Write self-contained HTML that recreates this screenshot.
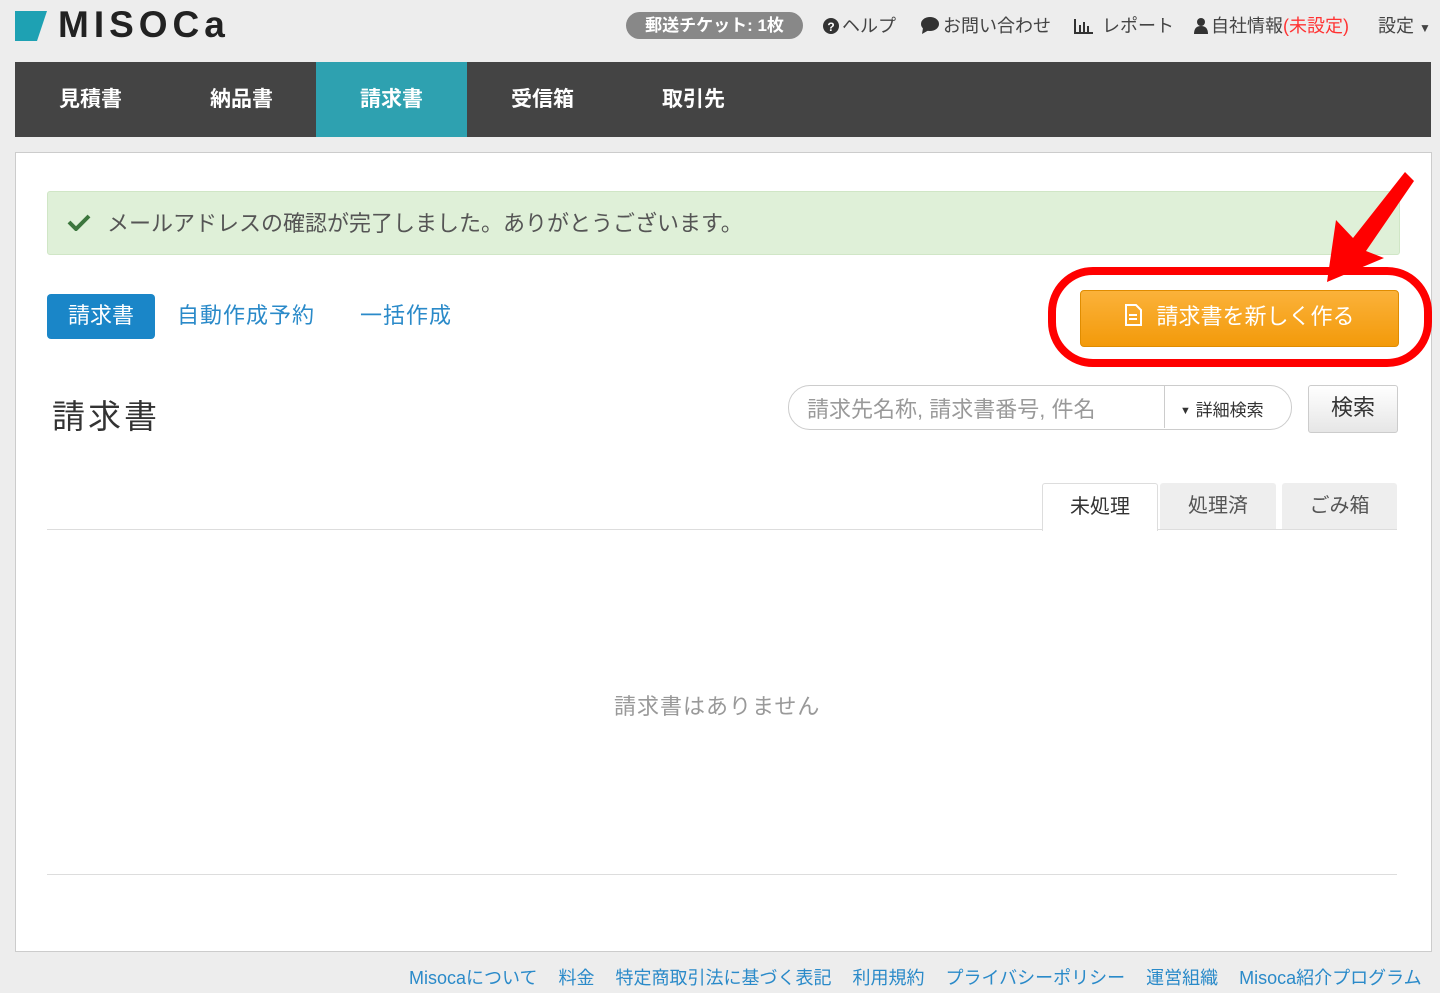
<!DOCTYPE html>
<html><head><meta charset="utf-8"><style>
body{margin:0;width:1440px;height:993px;background:#ededed;font-family:"Liberation Sans","Noto Sans CJK JP",sans-serif;position:relative;overflow:hidden;color:#333}
.a{position:absolute;white-space:nowrap}
.nav{position:absolute;left:15px;top:62px;width:1416px;height:75px;background:#444}
.nav div{position:absolute;top:0;height:75px;line-height:75px;width:151px;text-align:center;color:#fff;font-size:21px;font-weight:bold}
.top{font-size:18px;color:#444;top:12px}
.panel{position:absolute;left:15px;top:152px;width:1415px;height:798px;background:#fff;border:1px solid #ccc}
.ic{display:inline-block;vertical-align:-2px;margin-right:3px}
.ft span{margin-right:21px}
</style></head><body>
<svg class="a" style="left:15px;top:11px" width="32" height="32"><polygon points="0,0 32,0 22,30 0,30" fill="#1ea1b3"/></svg>
<div class="a" style="left:58px;top:4px;font-size:37px;font-weight:bold;color:#222;letter-spacing:5px">MISOCa</div>
<div class="a" style="left:626px;top:12px;width:177px;height:27px;border-radius:14px;background:#888;color:#fff;font-size:17px;font-weight:bold;text-align:center;line-height:27px">郵送チケット: 1枚</div>
<div class="a top" style="left:823px"><svg class="ic" width="16" height="16"><circle cx="8" cy="8" r="8" fill="#333"/><text x="8" y="13" font-size="12" font-weight="bold" fill="#fff" text-anchor="middle" font-family="Liberation Sans">?</text></svg>ヘルプ</div>
<div class="a top" style="left:920px"><svg class="ic" width="20" height="18"><ellipse cx="10" cy="8" rx="9" ry="7" fill="#333"/><polygon points="3,12 2,18 9,14" fill="#333"/></svg>お問い合わせ</div>
<div class="a top" style="left:1074px"><svg class="ic" width="20" height="16"><path d="M1 1V15H19" stroke="#333" stroke-width="2" fill="none"/><rect x="5" y="7" width="2" height="7" fill="#333"/><rect x="9" y="4" width="2" height="10" fill="#333"/><rect x="13" y="8" width="2" height="6" fill="#333"/></svg> レポート</div>
<div class="a top" style="left:1194px"><svg class="ic" width="14" height="17"><circle cx="7" cy="5" r="4" fill="#333"/><path d="M0 17Q0 9 7 9Q14 9 14 17Z" fill="#333"/></svg>自社情報<span style="color:#f33">(未設定)</span></div>
<div class="a top" style="left:1378px">設定 <span style="font-size:12px">▼</span></div>
<div class="nav">
<div style="left:0">見積書</div><div style="left:151px">納品書</div><div style="left:301px;background:#2ea1b0">請求書</div><div style="left:452px">受信箱</div><div style="left:603px">取引先</div>
</div>
<div class="panel"></div>
<div class="a" style="left:47px;top:191px;width:1351px;height:62px;background:#dff0d8;border:1px solid #d0e6c6;border-radius:3px"></div>
<svg class="a" style="left:67px;top:213px" width="24" height="18"><path d="M2 9L9 16L22 3" stroke="#3c763d" stroke-width="4" fill="none"/></svg>
<div class="a" style="left:107px;top:206px;font-size:22px;color:#555">メールアドレスの確認が完了しました。ありがとうございます。</div>
<div class="a" style="left:47px;top:294px;width:108px;height:45px;background:#1a86c8;border-radius:4px;color:#fff;font-size:22px;text-align:center;line-height:43px">請求書</div>
<div class="a" style="left:177px;top:298px;font-size:22px;color:#2a8ac9;letter-spacing:1px">自動作成予約</div>
<div class="a" style="left:360px;top:298px;font-size:22px;color:#2a8ac9;letter-spacing:1px">一括作成</div>
<div class="a" style="left:1080px;top:290px;width:317px;height:55px;background:linear-gradient(#fbb23a,#f39a0a);border:1px solid #e08c00;border-radius:4px;color:#fff;font-size:22px;text-align:center;line-height:52px"><svg class="ic" width="18" height="22" style="margin-right:14px"><path d="M2 1H12L17 6V21H2Z" stroke="#fff" stroke-width="2" fill="none"/><path d="M5 11H13M5 15H13" stroke="#fff" stroke-width="2"/></svg>請求書を新しく作る</div>
<div class="a" style="left:1048px;top:267px;width:368px;height:84px;border:8px solid #f00;border-radius:45px"></div>
<svg class="a" style="left:0;top:0" width="1440" height="400"><polygon points="1327,282 1336,220 1353,238 1405,172 1414,181 1366,251 1384,258" fill="#f00"/></svg>
<div class="a" style="left:52px;top:390px;font-size:33px;color:#333;letter-spacing:3px">請求書</div>
<div class="a" style="left:788px;top:385px;width:502px;height:43px;border:1px solid #ccc;border-radius:22px;background:#fff"></div>
<div class="a" style="left:1164px;top:386px;width:1px;height:42px;background:#ccc"></div>
<div class="a" style="left:807px;top:392px;font-size:22px;color:#999">請求先名称, 請求書番号, 件名</div>
<div class="a" style="left:1180px;top:396px;font-size:17px;color:#333"><span style="font-size:11px;vertical-align:2px">▼</span> 詳細検索</div>
<div class="a" style="left:1308px;top:385px;width:88px;height:46px;border:1px solid #ccc;border-radius:3px;background:linear-gradient(#fff,#e6e6e6);font-size:22px;text-align:center;line-height:44px">検索</div>
<div class="a" style="left:47px;top:529px;width:1350px;height:1px;background:#ddd"></div>
<div class="a" style="left:1042px;top:483px;width:114px;height:47px;background:#fff;border:1px solid #ddd;border-bottom:none;border-radius:3px 3px 0 0;font-size:20px;text-align:center;line-height:46px">未処理</div>
<div class="a" style="left:1160px;top:483px;width:116px;height:46px;background:#eee;border-radius:3px 3px 0 0;font-size:20px;text-align:center;line-height:46px;color:#555">処理済</div>
<div class="a" style="left:1282px;top:483px;width:115px;height:46px;background:#eee;border-radius:3px 3px 0 0;font-size:20px;text-align:center;line-height:46px;color:#555">ごみ箱</div>
<div class="a" style="left:614px;top:689px;font-size:22px;color:#999;letter-spacing:1px">請求書はありません</div>
<div class="a" style="left:47px;top:874px;width:1350px;height:1px;background:#ddd"></div>
<div class="a ft" style="left:409px;top:964px;font-size:18px;color:#2a8ac9"><span>Misocaについて</span><span>料金</span><span>特定商取引法に基づく表記</span><span>利用規約</span><span>プライバシーポリシー</span><span>運営組織</span><span style="margin:0">Misoca紹介プログラム</span></div>
</body></html>
